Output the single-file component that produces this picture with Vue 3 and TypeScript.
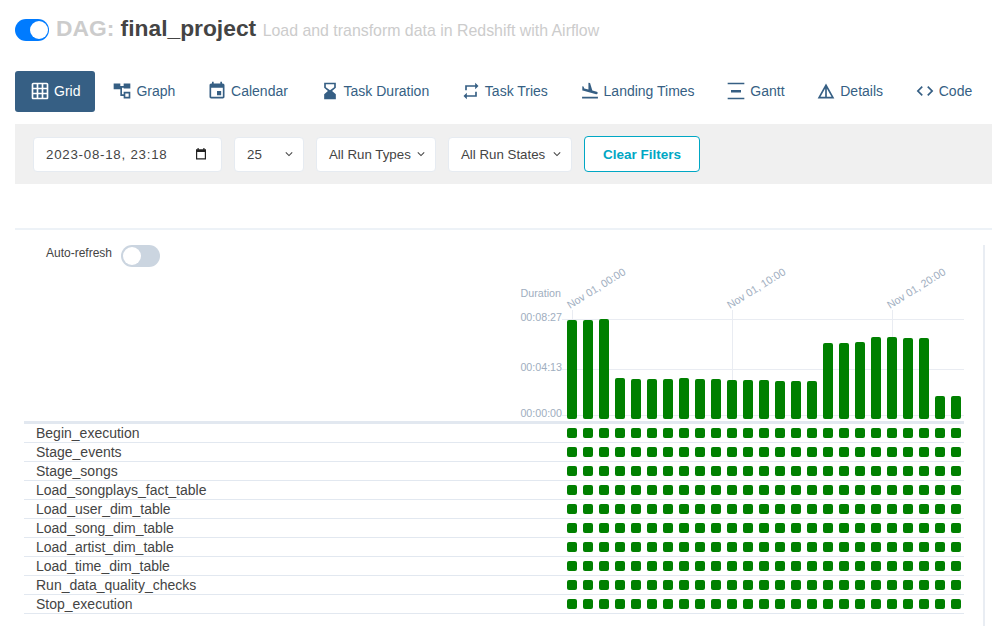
<script setup lang="ts">
interface Tab {
  label: string
  path: string
}

const tabs: Tab[] = [
  { label: 'Grid', path: 'M20 2H4c-1.1 0-2 .9-2 2v16c0 1.1.9 2 2 2h16c1.1 0 2-.9 2-2V4c0-1.1-.9-2-2-2zM8 20H4v-4h4v4zm0-6H4v-4h4v4zm0-6H4V4h4v4zm6 12h-4v-4h4v4zm0-6h-4v-4h4v4zm0-6h-4V4h4v4zm6 12h-4v-4h4v4zm0-6h-4v-4h4v4zm0-6h-4V4h4v4z' },
  { label: 'Graph', path: 'M2 3h8v3h4V3h8v6h-8V8h-2v8h2v-3h8v8h-8v-3h-4V10H2V3zm14 12v4h4v-4h-4z' },
  { label: 'Calendar', path: 'M17 12h-5v5h5v-5zM16 1v2H8V1H6v2H5c-1.11 0-1.99.9-1.99 2L3 19c0 1.1.89 2 2 2h14c1.1 0 2-.9 2-2V5c0-1.1-.9-2-2-2h-1V1h-2zm3 18H5V8h14v11z' },
  { label: 'Task Duration', path: 'M19 22v-6l-4.5-4L19 8V2H5v6l4.5 4L5 16v6h14zM7 7.5V4h10v3.5L12 11 7 7.5z' },
  { label: 'Task Tries', path: 'M7 7h10v3l4-4-4-4v3H5v6h2V7zm10 10H7v-3l-4 4 4 4v-3h12v-6h-2v4z' },
  { label: 'Landing Times', path: 'M2.5 19h19v2h-19zm7.18-5.73l4.35 1.16 5.31 1.42c.8.21 1.62-.26 1.84-1.06.21-.8-.26-1.62-1.06-1.84l-5.31-1.42-2.76-9.02L10.12 2v8.28L5.15 8.95l-.93-2.32-1.45-.39v5.17l1.6.43 5.31 1.43z' },
  { label: 'Gantt', path: 'M2 2h20v2H2V2zm0 18h20v2H2v-2zm4-9.3h12v3H6v-3z' },
  { label: 'Details', path: 'M12 3L2 21h20L12 3zm1 5.92L18.6 19H13V8.92zm-2 0V19H5.4L11 8.92z' },
  { label: 'Code', path: 'M9.4 16.6L4.8 12l4.6-4.6L8 6l-6 6 6 6 1.4-1.4zm5.2 0l4.6-4.6-4.6-4.6L16 6l6 6-6 6-1.4-1.4z' },
]

const tasks = [
  'Begin_execution',
  'Stage_events',
  'Stage_songs',
  'Load_songplays_fact_table',
  'Load_user_dim_table',
  'Load_song_dim_table',
  'Load_artist_dim_table',
  'Load_time_dim_table',
  'Run_data_quality_checks',
  'Stop_execution',
]

// top edge of each duration bar, read off the chart
const barTops = [320, 320, 319, 378, 379, 379, 379, 378, 379, 379, 380, 380, 380, 381, 381, 381, 343, 343, 342, 337, 337, 338, 338, 396, 396]
const chartTop = 260
const base = 419

const bars = barTops.map((top, i) => ({ x: 47 + i * 16, y: top - chartTop, h: base - top }))
const yTicks = [
  { label: '00:08:27', y: 59 },
  { label: '00:04:13', y: 109 },
  { label: '00:00:00', y: 155 },
]
const xTicks = [
  { label: 'Nov 01, 00:00', x: 52 },
  { label: 'Nov 01, 10:00', x: 212 },
  { label: 'Nov 01, 20:00', x: 372 },
]
</script>

<template>
  <div class="page">
    <header class="title-row">
      <span class="switch"><span class="knob"></span></span>
      <h1 class="title"><span class="dag">DAG:</span> final_project</h1>
      <span class="desc">Load and transform data in Redshift with Airflow</span>
    </header>

    <nav class="tabs">
      <a v-for="(tab, i) in tabs" :key="tab.label" class="tab" :class="{ active: i === 0 }">
        <svg class="tab-icon" viewBox="0 0 24 24"><path :d="tab.path" /></svg>
        {{ tab.label }}
      </a>
    </nav>

    <section class="filters">
      <div class="field date">
        <span>2023-08-18, 23:18</span>
        <svg class="cal" viewBox="0 0 14 14">
          <path d="M2 2.5h10v10H2z M3.2 5v6.3h7.6V5z" fill-rule="evenodd" />
          <path d="M3.5 1h1.2v2H3.5zM9.3 1h1.2v2H9.3zM2 2.5h10V5H2z" />
        </svg>
      </div>
      <div class="field num">
        <span>25</span>
        <svg class="chev" viewBox="0 0 10 6"><path d="M1 1l4 4 4-4" /></svg>
      </div>
      <div class="field types">
        <span>All Run Types</span>
        <svg class="chev" viewBox="0 0 10 6"><path d="M1 1l4 4 4-4" /></svg>
      </div>
      <div class="field states">
        <span>All Run States</span>
        <svg class="chev" viewBox="0 0 10 6"><path d="M1 1l4 4 4-4" /></svg>
      </div>
      <button class="clear">Clear Filters</button>
    </section>

    <div class="divider"></div>

    <main class="grid-panel">
      <div class="refresh">
        <span class="refresh-label">Auto-refresh</span>
        <span class="mini-switch"><span class="mini-knob"></span></span>
      </div>

      <div class="chart-row">
        <svg class="chart" width="460" height="161" viewBox="0 0 460 161">
          <text class="axis" x="41" y="37" text-anchor="end">Duration</text>
          <g v-for="t in yTicks" :key="t.label">
            <line x1="42" x2="444" :y1="t.y + 0.5" :y2="t.y + 0.5" class="rule" />
            <text class="axis" x="42" :y="t.y + 2" text-anchor="end">{{ t.label }}</text>
          </g>
          <g v-for="t in xTicks" :key="t.label">
            <line :x1="t.x + 0.5" :x2="t.x + 0.5" y1="50" y2="158" class="rule" />
            <text class="axis" :transform="`translate(${t.x - 2} 49) rotate(-32)`">{{ t.label }}</text>
          </g>
          <rect
            v-for="(b, i) in bars"
            :key="i"
            :x="b.x"
            :y="b.y"
            width="10"
            :height="b.h"
            rx="2"
            class="bar"
          />
        </svg>
      </div>

      <div class="rows">
        <div v-for="task in tasks" :key="task" class="row">
          <span class="task">{{ task }}</span>
          <span class="cells">
            <span v-for="n in 25" :key="n" class="cell"></span>
          </span>
        </div>
      </div>
    </main>
  </div>
</template>

<style scoped>
.page {
  width: 992px;
  height: 626px;
  overflow: hidden;
  background: #fff;
  font-family: "Liberation Sans", Arial, sans-serif;
  color: #51504f;
}

.title-row {
  display: flex;
  align-items: baseline;
  height: 59px;
  padding: 13px 0 0 15px;
  box-sizing: border-box;
  white-space: nowrap;
}

.switch {
  align-self: flex-start;
  margin-top: 6px;
  width: 34px;
  height: 22px;
  border-radius: 11px;
  background: #007bff;
  display: flex;
  align-items: center;
  justify-content: flex-end;
  padding-right: 1px;
  box-sizing: border-box;
  margin-right: 7px;
}

.knob {
  width: 18px;
  height: 18px;
  border-radius: 50%;
  background: #fff;
}

.title {
  margin: 0;
  font-size: 22.8px;
  line-height: 30px;
  font-weight: 700;
  color: #444;
}

.dag {
  color: #ccc;
}

.desc {
  margin-left: 6.5px;
  font-size: 15.9px;
  color: #ccc;
}

.tabs {
  display: flex;
  padding: 12px 0 0 15px;
  height: 41px;
  white-space: nowrap;
}

.tab {
  flex: none;
  height: 41px;
  display: flex;
  align-items: center;
  gap: 4px;
  padding: 0 16.7px 2px 15px;
  box-sizing: border-box;
  border-radius: 3px;
  font-size: 14px;
  color: #365f84;
}

.tab.active {
  background: #365f84;
  color: #fff;
  padding: 0 15px 2px 15px;
  margin-right: 2px;
}

.tab-icon {
  width: 20px;
  height: 20px;
  fill: currentColor;
  flex: none;
}

.filters {
  margin: 12px 0 0 15px;
  height: 60px;
  background: #f0f0f0;
  display: flex;
  align-items: center;
  padding-left: 18px;
  gap: 12px;
  box-sizing: border-box;
}

.field {
  height: 35px;
  background: #fff;
  border: 1px solid #e6ebf1;
  border-radius: 4px;
  box-sizing: border-box;
  display: flex;
  align-items: center;
  justify-content: space-between;
  font-size: 13.3px;
  color: #444;
  padding: 0 10px 0 12px;
}

.date {
  width: 189px;
  letter-spacing: 0.75px;
  padding-right: 13px;
}

.num {
  width: 70px;
}

.types {
  width: 120px;
}

.states {
  width: 124px;
}

.cal {
  width: 14px;
  height: 14px;
  fill: #222;
}

.chev {
  width: 8px;
  height: 6px;
  fill: none;
  stroke: #444;
  stroke-width: 1.3;
}

.clear {
  width: 116px;
  height: 36px;
  background: #fff;
  border: 1px solid #00a7c4;
  border-radius: 4px;
  color: #00a7c4;
  font: 700 13.5px "Liberation Sans", Arial, sans-serif;
}

.divider {
  margin: 44px 0 0 15px;
  height: 2px;
  background: #edf2f7;
}

.grid-panel {
  margin: 15px 0 0 24px;
  width: 961px;
  height: 381px;
  box-sizing: border-box;
  border-right: 2px solid #e9edf3;
}

.refresh {
  display: flex;
  align-items: center;
  gap: 9px;
  height: 22px;
  padding-left: 22px;
  font-size: 12px;
  color: #444;
}

.refresh-label {
  margin-top: -6px;
}

.mini-switch {
  width: 39px;
  height: 22px;
  border-radius: 11px;
  background: #cbd5e0;
  display: flex;
  align-items: center;
  padding-left: 2px;
  box-sizing: border-box;
}

.mini-knob {
  width: 18px;
  height: 18px;
  border-radius: 50%;
  background: #fff;
}

.chart-row {
  height: 161px;
  padding-left: 496px;
  margin-top: -7px;
}

.chart {
  display: block;
}

.axis {
  font-size: 10.7px;
  fill: #a0aec0;
}

.rule {
  stroke: #e9ecf2;
  stroke-width: 1;
}

.bar {
  fill: #008000;
}

.rows {
  width: 940px;
  border-top: 3px solid #e2e8f0;
}

.row {
  height: 19px;
  box-sizing: border-box;
  border-bottom: 1px solid #e2e8f0;
  display: flex;
  align-items: center;
  justify-content: space-between;
  padding-left: 12px;
  font-size: 14px;
  color: #444;
}

.cells {
  display: flex;
  gap: 6px;
  margin-right: 3px;
}

.cell {
  width: 10px;
  height: 10px;
  border-radius: 2px;
  background: #008000;
}
</style>

<style>
html,
body {
  margin: 0;
  background: #fff;
}
</style>
